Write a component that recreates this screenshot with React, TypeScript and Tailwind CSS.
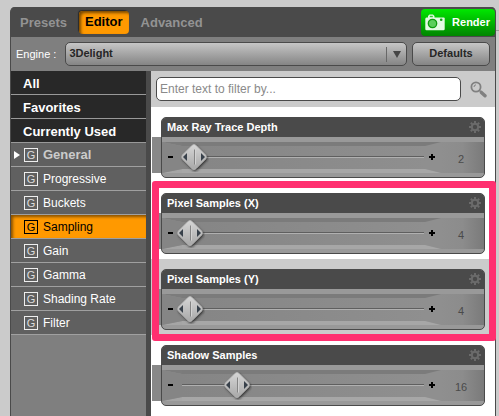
import React, { useState } from 'react';
import { clsx } from 'clsx';

const MAX_TRACK = 240;

interface Setting {
  id: string;
  label: string;
  value: string;
  position: number;
}

const sections = ['All', 'Favorites', 'Currently Used'];

const groups = [
  'General',
  'Progressive',
  'Buckets',
  'Sampling',
  'Gain',
  'Gamma',
  'Shading Rate',
  'Filter',
];

const settings: Record<string, Setting> = {
  depth: { id: 'depth', label: 'Max Ray Trace Depth', value: '2', position: 12 },
  pixelX: { id: 'pixel-x', label: 'Pixel Samples (X)', value: '4', position: 8 },
  pixelY: { id: 'pixel-y', label: 'Pixel Samples (Y)', value: '4', position: 8 },
  shadow: { id: 'shadow', label: 'Shadow Samples', value: '16', position: 55 },
};

const CameraIcon = () => (
  <svg width="20" height="17" viewBox="0 0 20 17" aria-hidden="true">
    <path
      d="M1.5 3.5H3V2L4.5 .5H8L9.5 2v1.5h9A1.2 1.2 0 0 1 19.7 5v10a1.2 1.2 0 0 1-1.2 1.2h-17A1.2 1.2 0 0 1 .3 15V5a1.5 1.5 0 0 1 1.2-1.5Z"
      fill="#e2fbe2"
    />
    <circle cx="7.5" cy="9.5" r="4.2" fill="#5ccf5c" stroke="#0d9c0d" strokeWidth="1.3" />
    <rect x="4.8" y="1.8" width="3" height="1.4" fill="#35c435" />
    <circle cx="16.2" cy="5.8" r="1.3" fill="#12a012" />
  </svg>
);

const GearIcon = () => (
  <svg width="12" height="12" viewBox="0 0 12 12" fill="none" stroke="#6b6b6b" aria-hidden="true">
    <circle cx="6" cy="6" r="3.2" strokeWidth="2" />
    <path
      d="M6 0v2.4M6 9.6V12M0 6h2.4M9.6 6H12M1.8 1.8l1.6 1.6M8.6 8.6l1.6 1.6M10.2 1.8 8.6 3.4M3.4 8.6l-1.6 1.6"
      strokeWidth="2"
    />
  </svg>
);

const SearchIcon = () => (
  <svg width="17" height="17" viewBox="0 0 17 17" fill="none" stroke="#808080" aria-hidden="true">
    <circle cx="6" cy="6" r="4.6" strokeWidth="1.8" />
    <path d="M4 6a2.2 2.2 0 0 1 2-2.2" strokeWidth="1" />
    <path d="m9.3 9.3 2 2" strokeWidth="1.6" />
    <path d="m11.4 11.4 3.6 3.4" strokeWidth="3.4" strokeLinecap="round" />
  </svg>
);

const Handle = () => (
  <svg width="30" height="30" viewBox="0 0 30 30" className="block" aria-hidden="true">
    <defs>
      <linearGradient id="handle-fill" x1="0" y1="0" x2="0" y2="1">
        <stop offset="0" stopColor="#d6d6d6" />
        <stop offset="1" stopColor="#a8a8a8" />
      </linearGradient>
      <filter id="handle-shadow" x="-20%" y="-20%" width="150%" height="150%">
        <feDropShadow dx="1" dy="1.5" stdDeviation="1" floodColor="#222" floodOpacity="0.8" />
      </filter>
    </defs>
    <path
      d="M13 3.4Q15 1.6 17 3.4L26.6 13Q28 15 26.6 17L17 26.6Q15 28.4 13 26.6L3.4 17Q2 15 3.4 13Z"
      fill="url(#handle-fill)"
      stroke="#bcbcbc"
      strokeWidth="0.7"
      filter="url(#handle-shadow)"
    />
    <path d="M15.5 7.5v15" stroke="#858585" />
    <path d="M16.5 7.5v15" stroke="#d2d2d2" />
    <path d="M4 15 8 11v8ZM26 15l-4-4v8Z" fill="#38414b" />
  </svg>
);

// recessed groove behind the slider: dark upper lip, light lower lip, tapered ends
const Groove = () => (
  <div className="absolute inset-x-0 top-[5px] flex h-[31px]" aria-hidden="true">
    <svg width="20" height="31" viewBox="0 0 20 31" className="shrink-0">
      <rect width="20" height="31" fill="#8d8d8d" />
      <path d="M0 0h20v4Z" fill="#7c7c7c" />
      <path d="M0 31 20 27v4Z" fill="#a5a5a5" />
      <path d="M0 0 20 4v23L0 31Z" fill="#858585" />
    </svg>
    <div className="flex-1 border-t-4 border-b-4 border-t-[#7b7b7b] border-b-[#a7a7a7] bg-linear-to-r from-[#858585] to-[#8f8f8f]" />
    <svg width="16" height="31" viewBox="0 0 16 31" className="shrink-0">
      <rect width="16" height="31" fill="#8f8f8f" />
      <path d="M0 0h16L0 4Z" fill="#7b7b7b" />
      <path d="M0 31h16L0 27Z" fill="#a7a7a7" />
    </svg>
    <div className="w-[43px] bg-linear-to-r from-[#8f8f8f] via-[#8c8c8c] to-[#7a7a7a]" />
  </div>
);

const SettingRow: React.FC<{ setting: Setting; shaded?: boolean }> = ({ setting, shaded }) => {
  const [position, setPosition] = useState(setting.position);

  return (
    <div className={clsx('relative px-2.5 pt-2.5 pb-[5px]', shaded ? 'bg-[#cbcbcb]' : 'bg-white')}>
      <div className="absolute top-[30px] left-px h-9 w-[9px] bg-[#888]" />
      <div className="relative overflow-hidden rounded-[5px] border border-[#4a4a4a] bg-[#999]">
        <div className="flex h-[19px] items-center justify-between bg-[#4a4a4a] pr-[3px] pb-px pl-[5px]">
          <label htmlFor={setting.id} className="text-[11px] leading-4 font-bold text-white">
            {setting.label}
          </label>
          <button type="button" aria-label={`${setting.label} options`}>
            <GearIcon />
          </button>
        </div>
        <div className="relative h-10">
          <Groove />
          <div className="relative flex h-10 items-center">
            <button type="button" aria-label="Decrease" className="flex w-5 justify-center pr-1">
              <span className="h-0.5 w-[5px] bg-black" />
            </button>
            <div className="relative h-[30px] flex-1">
              <div className="absolute inset-x-0 top-[14px] h-0.5 border-t border-b border-t-[#5f5f5f] border-b-[#b0b0b0]" />
              <div
                className="absolute top-0 -ml-[15px]"
                style={{ left: `${(position / MAX_TRACK) * 100}%` }}
              >
                <Handle />
              </div>
              <input
                id={setting.id}
                type="range"
                max={MAX_TRACK}
                value={position}
                onChange={(e) => setPosition(Number(e.target.value))}
                className="absolute inset-0 h-full w-full cursor-pointer opacity-0"
              />
            </div>
            <button type="button" aria-label="Increase" className="flex w-4 justify-center">
              <svg width="6" height="6" viewBox="0 0 6 6">
                <path d="M3 0v6M0 3h6" stroke="#000" strokeWidth="2" />
              </svg>
            </button>
            <input
              type="text"
              aria-label={`${setting.label} value`}
              defaultValue={setting.value}
              className="mt-1 mr-1 w-10 bg-transparent pl-0.5 text-center text-[11px] leading-4 text-[#4a4a4a] outline-none"
            />
          </div>
        </div>
      </div>
    </div>
  );
};

const Sidebar = () => (
  <nav className="w-[140px] shrink-0 border-r-[5px] border-[#4a4a4a] bg-[#7f7f7f]">
    {sections.map((name) => (
      <button
        key={name}
        type="button"
        className="flex h-6 w-full items-center border-b border-[#999] bg-[#282828] pt-0.5 pl-3 text-[13px] leading-4 font-bold text-white"
      >
        {name}
      </button>
    ))}
    {groups.map((name) => {
      const active = name === 'Sampling';
      const heading = name === 'General';
      return (
        <button
          key={name}
          type="button"
          className={clsx(
            'flex h-6 w-full items-center border-b border-[#a0a0a0]',
            active
              ? 'bg-[#ff9900] text-black shadow-[inset_2px_2px_3px_#8a5200]'
              : 'bg-[#606060] text-white'
          )}
        >
          <span className="flex w-[13px] justify-end pr-1">
            {heading && (
              <svg width="6" height="8" viewBox="0 0 6 8" className="shrink-0">
                <path d="M0 0 6 4 0 8Z" fill="#fff" />
              </svg>
            )}
          </span>
          <span
            className={clsx(
              'mr-[5px] flex h-[14px] w-[14px] items-center justify-center border text-[11px] leading-3',
              active ? 'border-black' : 'border-[#eee] text-[#ddd]'
            )}
          >
            G
          </span>
          <span
            className={clsx(
              'leading-4',
              heading ? 'pt-px text-[13px] font-bold text-[#cbcbcb]' : 'text-[12px]'
            )}
          >
            {name}
          </span>
        </button>
      );
    })}
  </nav>
);

const App: React.FC = () => {
  return (
    <div className="relative flex min-h-screen flex-col bg-[#cbcbcb] pt-[7px] pr-[3px] pl-2.5 font-['Liberation_Sans',Arial,sans-serif]">
      <div className="absolute top-[30px] right-0 h-px w-[3px] bg-[#999]" />
      <div className="flex flex-1 flex-col rounded-t-[5px] border-x border-[#4a4a4a] bg-[#7f7f7f]">
        <header className="flex h-[30px] items-center justify-between rounded-t bg-[#4a4a4a] pl-[9px] text-[13px] leading-4 font-bold">
          <div className="flex items-center">
            <button type="button" className="mr-3 pt-0.5 text-[#939393]">
              Presets
            </button>
            <button
              type="button"
              className="mr-3 h-[23px] rounded bg-[#ff9900] px-1.5 text-black shadow-[inset_2px_2px_3px_#7a4900,-1px_-1px_1px_#2a2a2a]"
            >
              Editor
            </button>
            <button type="button" className="pt-0.5 text-[#939393]">
              Advanced
            </button>
          </div>
          <button
            type="button"
            className="flex h-[27px] items-center gap-[7px] rounded bg-linear-to-b from-[#00e800] to-[#008500] pr-[5px] pl-1 text-[11px] font-bold text-white"
          >
            <CameraIcon />
            Render
          </button>
        </header>

        <div className="flex h-[34px] items-center pr-[5px] pl-[5px] text-[11px]">
          <label htmlFor="engine" className="mr-[9px] leading-4 text-white">
            Engine :
          </label>
          <div className="relative mr-[5px] flex-1">
            <select
              id="engine"
              className="block h-6 w-full appearance-none rounded-[5px] border border-[#4a4a4a] bg-linear-to-b from-[#c6c6c6] to-[#858585] px-[3px] pb-0.5 font-bold text-[#262626] outline-none"
            >
              <option>3Delight</option>
            </select>
            <div className="pointer-events-none absolute inset-y-0 right-[6px] flex items-center">
              <div className="mr-1.5 h-[15px] w-px bg-[#686868]" />
              <svg width="8" height="7" viewBox="0 0 8 7" aria-hidden="true">
                <path d="M0 0h8L4 7Z" fill="#454545" />
              </svg>
            </div>
          </div>
          <button
            type="button"
            className="h-6 w-[78px] rounded-[5px] border border-[#4a4a4a] bg-linear-to-b from-[#c6c6c6] to-[#858585] pb-0.5 font-bold text-[#262626]"
          >
            Defaults
          </button>
        </div>

        <div className="flex flex-1">
          <Sidebar />
          <main className="min-w-0 flex-1 bg-white">
            <div className="flex h-9 items-center bg-[#cbcbcb] pr-2 pl-[5px]">
              <input
                type="text"
                aria-label="Filter settings"
                placeholder="Enter text to filter by..."
                className="h-6 min-w-0 flex-1 rounded-[5px] border border-[#4a4a4a] bg-white px-[3px] text-[12px] leading-4 text-black outline-none placeholder:text-[#8a8a8a]"
              />
              <button type="button" aria-label="Search" className="ml-[9px]">
                <SearchIcon />
              </button>
            </div>

            <SettingRow setting={settings.depth} />
            <div className="relative">
              <SettingRow setting={settings.pixelX} />
              <SettingRow setting={settings.pixelY} shaded />
              <div className="pointer-events-none absolute -top-0.5 -right-px -bottom-1.5 left-px z-10 rounded-[3px] border-[7px] border-[#ff3070]" />
            </div>
            <SettingRow setting={settings.shadow} />
          </main>
        </div>
      </div>
    </div>
  );
};

export default App;
